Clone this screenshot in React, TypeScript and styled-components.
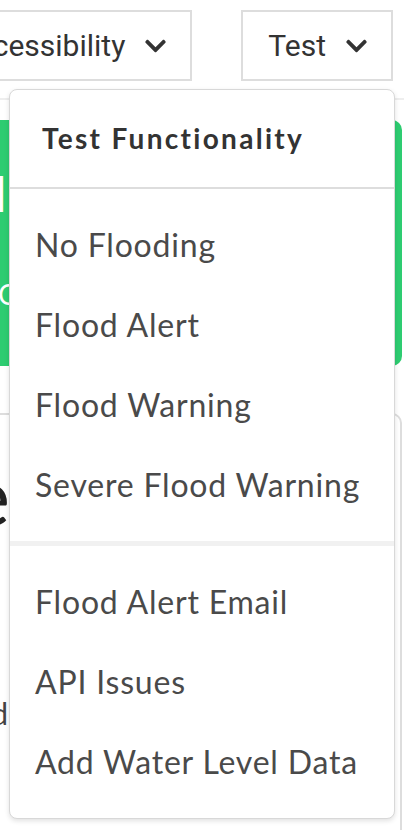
import React from 'react';
import styled, { createGlobalStyle } from 'styled-components';
import { FaChevronDown } from 'react-icons/fa';

const Global = createGlobalStyle`
  html, body { margin: 0; padding: 0; background: #fff; overflow: hidden; }
  body { font-family: Lato, "Noto Sans", sans-serif; }
  * { box-sizing: border-box; }
`;

const Page = styled.div`
  position: relative;
  width: 404px;
  height: 830px;
  overflow: hidden;
`;

const Header = styled.header`
  display: flex;
  justify-content: flex-end;
  gap: 49px;
  padding: 10px 11px 17px 0;
  border-bottom: 2px solid #eeeeee;
`;

const DropButton = styled.button`
  flex-shrink: 0;
  display: flex;
  align-items: center;
  gap: 20px;
  height: 71px;
  padding: 0 24px 0 25px;
  border: 2px solid #dddddd;
  background: #fff;
  color: #333;
  font: 400 30px Roboto, "Liberation Sans", sans-serif;
  svg {
    width: 21px;
    height: 24px;
    color: #333;
  }
`;

const Main = styled.main`
  display: flex;
  flex-direction: column;
  gap: 47px;
  padding: 20px 2px 0 0;
`;

const StatusCard = styled.section`
  margin-left: -400px;
  height: 246px;
  padding-top: 45px;
  background: #2ecc71;
  border-radius: 10px;
  color: #fff;
  display: flex;
  flex-direction: column;
`;

const StatusTitle = styled.h2`
  margin: 0;
  width: 406px;
  display: flex;
  justify-content: flex-end;
  font: 700 48px Lato, sans-serif;
  line-height: 1.2;
  white-space: nowrap;
`;

const StatusText = styled.p`
  margin: 55px 0 0 398px;
  font: 400 28px Lato, sans-serif;
  line-height: 1.2;
  white-space: nowrap;
`;

const StationCard = styled.section`
  margin-left: -400px;
  height: 480px;
  padding-top: 30px;
  border: 2px solid #dddddd;
  border-radius: 10px;
  display: flex;
  flex-direction: column;
`;

const StationName = styled.h1`
  margin: 0;
  width: 408px;
  display: flex;
  justify-content: flex-end;
  font: 400 82px Lato, sans-serif;
  line-height: 1.2;
  color: #222;
  white-space: nowrap;
`;

const StationMeta = styled.p`
  margin: 152px 0 0;
  width: 406px;
  display: flex;
  justify-content: flex-end;
  font: 400 30px Lato, sans-serif;
  line-height: 1.2;
  color: #444;
  white-space: nowrap;
`;

const Menu = styled.div`
  position: absolute;
  top: 89px;
  left: 9px;
  width: 386px;
  background: #fff;
  border: 1px solid #d8d8d8;
  border-radius: 8px;
  box-shadow: 0 2px 5px rgba(0, 0, 0, 0.12);
  display: flex;
  flex-direction: column;
  overflow: hidden;
`;

const MenuTitle = styled.div`
  height: 99px;
  padding-left: 32px;
  font: 700 28px Lato, sans-serif;
  line-height: 97px;
  letter-spacing: 2.3px;
  color: #333;
  border-bottom: 2px solid #dddddd;
`;

const MenuGroup = styled.div<{ $divided?: boolean }>`
  display: flex;
  flex-direction: column;
  padding: 16px 0;
  border-top: ${(p) => (p.$divided ? '5px solid #f1f1f1' : 'none')};
`;

const MenuItem = styled.div`
  height: 80px;
  padding-left: 25px;
  font: 400 32px Lato, sans-serif;
  line-height: 80px;
  letter-spacing: 0.8px;
  color: #4a4a4a;
  white-space: nowrap;
`;

const levels = ['No Flooding', 'Flood Alert', 'Flood Warning', 'Severe Flood Warning'];
const extras = ['Flood Alert Email', 'API Issues', 'Add Water Level Data'];

export default function App() {
  return (
    <Page>
      <Global />
      <Header>
        <DropButton>
          Accessibility
          <FaChevronDown />
        </DropButton>
        <DropButton>
          Test
          <FaChevronDown />
        </DropButton>
      </Header>
      <Main>
        <StatusCard>
          <StatusTitle>Normal</StatusTitle>
          <StatusText>Conditions are normal</StatusText>
        </StatusCard>
        <StationCard>
          <StationName>Cockermouth Bridge</StationName>
          <StationMeta>Last updated</StationMeta>
        </StationCard>
      </Main>
      <Menu>
        <MenuTitle>Test Functionality</MenuTitle>
        <MenuGroup>
          {levels.map((l) => (
            <MenuItem key={l}>{l}</MenuItem>
          ))}
        </MenuGroup>
        <MenuGroup $divided>
          {extras.map((l) => (
            <MenuItem key={l}>{l}</MenuItem>
          ))}
        </MenuGroup>
      </Menu>
    </Page>
  );
}
